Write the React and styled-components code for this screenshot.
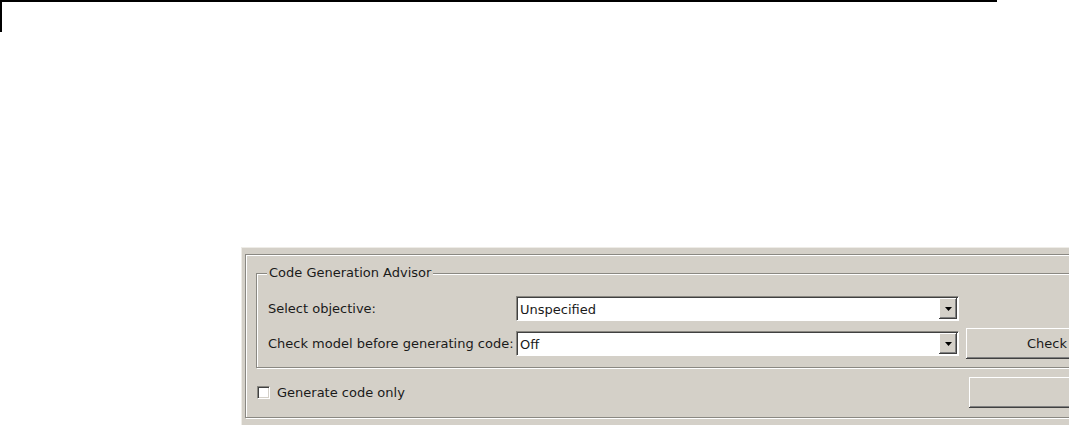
import React from "react";
import styled, { createGlobalStyle } from "styled-components";

const GlobalStyle = createGlobalStyle`
  html, body {
    margin: 0;
    padding: 0;
    background: #ffffff;
    overflow: hidden;
  }
  body {
    font-family: "DejaVu Sans", "Liberation Sans", sans-serif;
    font-size: 13px;
    color: #1a1a1a;
  }
`;

const Page = styled.div`
  width: 1069px;
  height: 425px;
  overflow: hidden;
`;

const TopFrame = styled.div`
  width: 995px;
  height: 30px;
  border-top: 2px solid #000;
  border-left: 2px solid #000;
`;

const Panel = styled.div`
  box-sizing: border-box;
  margin: 215px 0 0 241px;
  width: 828px;
  height: 178px;
  background: #d4d0c8;
  border-top: 1px solid #eeece7;
  border-left: 1px solid #eeece7;
  padding: 6px 0 0 3px;
  overflow: hidden;
`;

const Frame = styled.div`
  box-sizing: border-box;
  width: 1000px;
  height: 164px;
  border: 1px solid #8a8882;
  box-shadow: inset 1px 1px 0 #ffffff, 1px 1px 0 #ffffff;
  padding: 18px 0 0 10px;
`;

const Group = styled.div`
  position: relative;
  box-sizing: border-box;
  width: 980px;
  border: 1px solid #8a8882;
  box-shadow: inset 1px 1px 0 #ffffff, 1px 1px 0 #ffffff;
  padding: 22px 0 11px 11px;
`;

const Legend = styled.span`
  position: absolute;
  top: -9px;
  left: 10px;
  padding: 0 2px;
  line-height: 16px;
  background: #d4d0c8;
`;

const FormGrid = styled.div`
  display: grid;
  grid-template-columns: 248px 443px auto;
  grid-auto-rows: 25px;
  row-gap: 10px;
  align-items: center;
`;

const FieldLabel = styled.span`
  white-space: nowrap;
`;

const Combo = styled.div`
  box-sizing: border-box;
  display: flex;
  align-items: center;
  height: 25px;
  padding: 1px 1px 1px 3px;
  background: #ffffff;
  border-top: 1px solid #8a8882;
  border-left: 1px solid #8a8882;
  border-bottom: 1px solid #ffffff;
  border-right: 1px solid #ffffff;
  box-shadow: inset 1px 1px 0 #404040;
`;

const ComboText = styled.span`
  flex: 1;
  padding-top: 1px;
`;

const DropButton = styled.div`
  box-sizing: border-box;
  display: flex;
  align-items: center;
  justify-content: center;
  width: 18px;
  height: 100%;
  background: #d4d0c8;
  box-shadow: inset -1px -1px 0 #404040, inset 1px 1px 0 #ffffff,
    inset -2px -2px 0 #808080;
`;

const PushButton = styled.div`
  box-sizing: border-box;
  flex-shrink: 0;
  display: flex;
  align-items: center;
  width: ${(p) => p.$width}px;
  height: 31px;
  margin: ${(p) => p.$margin || "0"};
  padding-left: ${(p) => p.$textInset || 0}px;
  background: #d4d0c8;
  white-space: nowrap;
  box-shadow: inset -1px -1px 0 #404040, inset 1px 1px 0 #ffffff,
    inset -2px -2px 0 #808080;
`;

const BottomRow = styled.div`
  display: flex;
  align-items: center;
  margin-top: 9px;
  height: 31px;
`;

const CheckArea = styled.label`
  flex-shrink: 0;
  display: flex;
  align-items: center;
  width: 712px;
  margin-left: 1px;
`;

const CheckBox = styled.span`
  box-sizing: border-box;
  width: 13px;
  height: 13px;
  background: #ffffff;
  border-top: 1px solid #8a8882;
  border-left: 1px solid #8a8882;
  border-bottom: 1px solid #ffffff;
  border-right: 1px solid #ffffff;
  box-shadow: inset 1px 1px 0 #404040, inset -1px -1px 0 #d4d0c8;
`;

const CheckText = styled.span`
  margin-left: 7px;
`;

const Arrow = () => (
  <svg width="7" height="4" viewBox="0 0 7 4">
    <path d="M0 0 H7 L3.5 4 Z" fill="#000" />
  </svg>
);

function ComboBox({ value }) {
  return (
    <Combo>
      <ComboText>{value}</ComboText>
      <DropButton>
        <Arrow />
      </DropButton>
    </Combo>
  );
}

export default function App() {
  return (
    <Page>
      <GlobalStyle />
      <TopFrame />
      <Panel>
        <Frame>
          <Group>
            <Legend>Code Generation Advisor</Legend>
            <FormGrid>
              <FieldLabel>Select objective:</FieldLabel>
              <ComboBox value="Unspecified" />
              <span />
              <FieldLabel>Check model before generating code:</FieldLabel>
              <ComboBox value="Off" />
              <PushButton $width={200} $margin="-3px 0 -3px 7px" $textInset={61}>
                Check
              </PushButton>
            </FormGrid>
          </Group>
          <BottomRow>
            <CheckArea>
              <CheckBox />
              <CheckText>Generate code only</CheckText>
            </CheckArea>
            <PushButton $width={200} />
          </BottomRow>
        </Frame>
      </Panel>
    </Page>
  );
}
